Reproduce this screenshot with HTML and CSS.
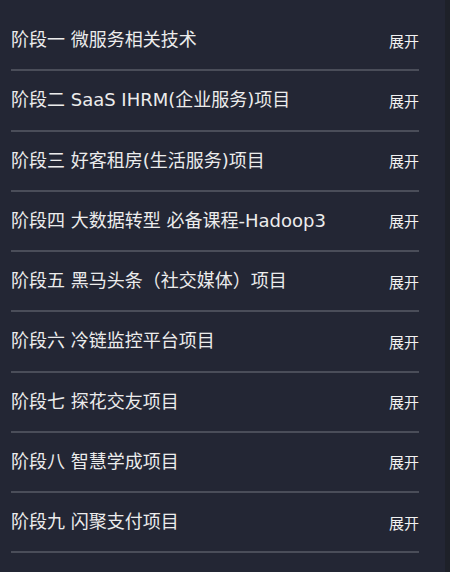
FILE: index.html
```html
<!DOCTYPE html>
<html lang="zh-CN">
<head>
    <meta charset="UTF-8">
    <meta name="viewport" content="width=device-width, initial-scale=1.0">
    <title>课程阶段</title>
    <link rel="stylesheet" href="styles.css">
</head>
<body>
    <div class="page">
        <ul class="stages">
            <li class="stage"><span class="stage-title">阶段一 微服务相关技术</span><span class="toggle">展开</span></li>
            <li class="stage"><span class="stage-title">阶段二 SaaS IHRM(企业服务)项目</span><span class="toggle">展开</span></li>
            <li class="stage"><span class="stage-title">阶段三 好客租房(生活服务)项目</span><span class="toggle">展开</span></li>
            <li class="stage"><span class="stage-title">阶段四 大数据转型 必备课程-Hadoop3</span><span class="toggle">展开</span></li>
            <li class="stage"><span class="stage-title">阶段五 黑马头条（社交媒体）项目</span><span class="toggle">展开</span></li>
            <li class="stage"><span class="stage-title">阶段六 冷链监控平台项目</span><span class="toggle">展开</span></li>
            <li class="stage"><span class="stage-title">阶段七 探花交友项目</span><span class="toggle">展开</span></li>
            <li class="stage"><span class="stage-title">阶段八 智慧学成项目</span><span class="toggle">展开</span></li>
            <li class="stage"><span class="stage-title">阶段九 闪聚支付项目</span><span class="toggle">展开</span></li>
        </ul>
        <div class="scroll-edge"></div>
    </div>
</body>
</html>
```

FILE: styles.css
```css
body {
    margin: 0;
    background-color: #232634;
    color: #ececec;
    font-family: "DejaVu Sans", "Noto Sans CJK SC", sans-serif;
}

.page {
    display: flex;
    height: 572px;
    overflow: hidden;
}

.stages {
    list-style: none;
    margin: 0;
    padding: 11px 0 0 11px;
    width: 408px;
}

.stage {
    display: flex;
    align-items: center;
    justify-content: space-between;
    height: 58.25px;
    border-bottom: 2px solid #4a4d59;
}

.stage-title {
    font-size: 18px;
    line-height: 24px;
}

.toggle {
    font-size: 15px;
    line-height: 20px;
    margin-top: 3px;
    color: #f2f2f2;
}

.scroll-edge {
    margin-left: auto;
    width: 5px;
    background-color: #1e2129;
}
```
